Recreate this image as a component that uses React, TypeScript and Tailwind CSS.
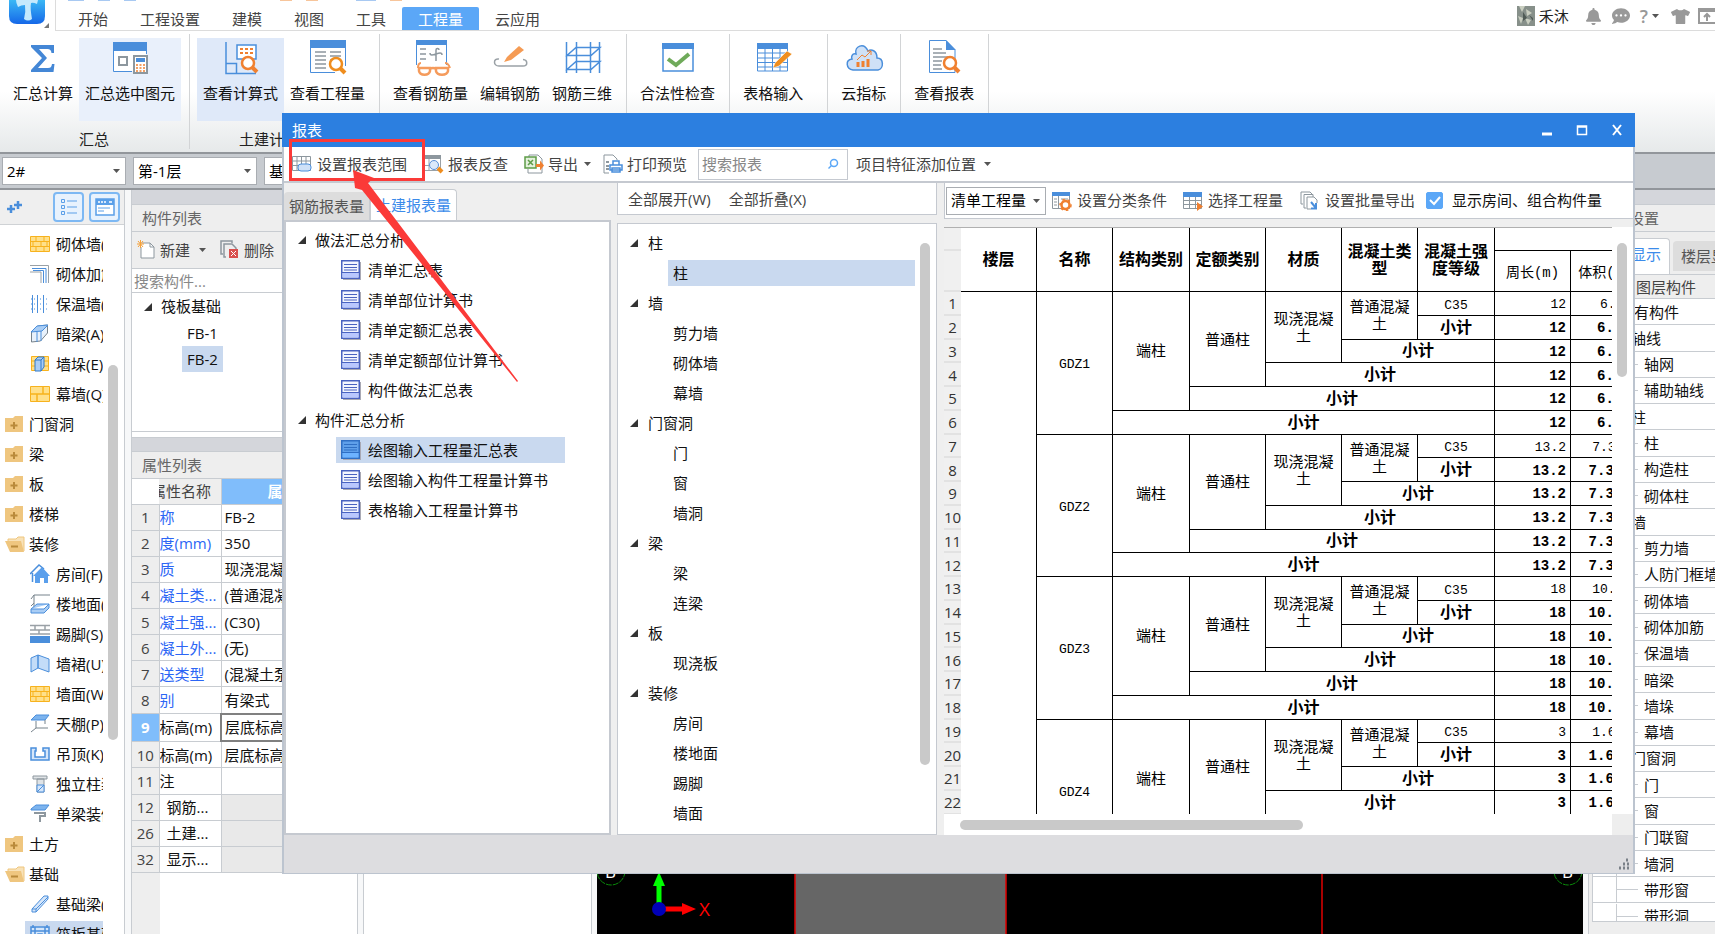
import { Fragment, useState } from "react";
import type { ReactNode } from "react";
import clsx from "clsx";
import { FaBell, FaCommentDots, FaTshirt } from "react-icons/fa";

const MENU_TABS = ["开始", "工程设置", "建模", "视图", "工具", "工程量", "云应用"];

const RIBBON_GROUPS = [
  { label: "汇总", buttons: [["汇总计算", "sigma"], ["汇总选中图元", "sumSelected"]] },
  { label: "土建计算结果", buttons: [["查看计算式", "formula"], ["查看工程量", "quantity"]] },
  { label: "", buttons: [["查看钢筋量", "rebarQty"], ["编辑钢筋", "rebarEdit"], ["钢筋三维", "rebar3d"]] },
  { label: "", buttons: [["合法性检查", "check"]] },
  { label: "", buttons: [["表格输入", "tableInput"]], wide: true },
  { label: "", buttons: [["云指标", "cloud"]] },
  { label: "", buttons: [["查看报表", "report"]] },
];

const NAV_ITEMS = [
  ["砌体墙(Q)", "brick"],
  ["砌体加筋(Y)", "corner"],
  ["保温墙(W)", "fence"],
  ["暗梁(A)", "box"],
  ["墙垛(E)", "pier"],
  ["幕墙(Q)", "brickBig"],
  ["门窗洞", "folder"],
  ["梁", "folder"],
  ["板", "folder"],
  ["楼梯", "folder"],
  ["装修", "folderOpen"],
  ["房间(F)", "house"],
  ["楼地面(V)", "floor"],
  ["踢脚(S)", "skirting"],
  ["墙裙(U)", "dado"],
  ["墙面(W)", "brick"],
  ["天棚(P)", "ceiling"],
  ["吊顶(K)", "suspended"],
  ["独立柱装修", "column"],
  ["单梁装修", "roller"],
  ["土方", "folder"],
  ["基础", "folderOpen"],
  ["基础梁(F)", "beam"],
  ["筏板基础(M)", "raft"],
];

const PROPERTIES = [
  { no: 1, name: "称", value: "FB-2", blue: true },
  { no: 2, name: "度(mm)", value: "350", blue: true },
  { no: 3, name: "质", value: "现浇混凝土", blue: true },
  { no: 4, name: "凝土类...", value: "(普通混凝土)", blue: true },
  { no: 5, name: "凝土强...", value: "(C30)", blue: true },
  { no: 6, name: "凝土外...", value: "(无)", blue: true },
  { no: 7, name: "送类型", value: "(混凝土泵)", blue: true },
  { no: 8, name: "别", value: "有梁式", blue: true },
  { no: 9, name: "标高(m)", value: "层底标高+0.35", active: true },
  { no: 10, name: "标高(m)", value: "层底标高" },
  { no: 11, name: "注", value: "" },
  { no: 12, name: "钢筋...", value: "", group: true },
  { no: 26, name: "土建...", value: "", group: true },
  { no: 32, name: "显示...", value: "", group: true },
];

const REPORT_TREE = [
  {
    title: "做法汇总分析",
    items: ["清单汇总表", "清单部位计算书", "清单定额汇总表", "清单定额部位计算书", "构件做法汇总表"],
  },
  {
    title: "构件汇总分析",
    items: ["绘图输入工程量汇总表", "绘图输入构件工程量计算书", "表格输入工程量计算书"],
  },
];

const ELEMENT_TREE = [
  { title: "柱", items: ["柱"] },
  { title: "墙", items: ["剪力墙", "砌体墙", "幕墙"] },
  { title: "门窗洞", items: ["门", "窗", "墙洞"] },
  { title: "梁", items: ["梁", "连梁"] },
  { title: "板", items: ["现浇板"] },
  { title: "装修", items: ["房间", "楼地面", "踢脚", "墙面"] },
];

const COLUMNS_DATA = [
  { name: "GDZ1", perimeter: "12", volume: "6.552" },
  { name: "GDZ2", perimeter: "13.2", volume: "7.3194" },
  { name: "GDZ3", perimeter: "18", volume: "10.296" },
  { name: "GDZ4", perimeter: "3", volume: "1.6560" },
];

const LAYERS: [string, number][] = [
  ["所有构件", 0],
  ["轴线", 1],
  ["轴网", 2],
  ["辅助轴线", 2],
  ["柱", 1],
  ["柱", 2],
  ["构造柱", 2],
  ["砌体柱", 2],
  ["墙", 1],
  ["剪力墙", 2],
  ["人防门框墙", 2],
  ["砌体墙", 2],
  ["砌体加筋", 2],
  ["保温墙", 2],
  ["暗梁", 2],
  ["墙垛", 2],
  ["幕墙", 2],
  ["门窗洞", 1],
  ["门", 2],
  ["窗", 2],
  ["门联窗", 2],
  ["墙洞", 2],
  ["带形窗", 2],
  ["带形洞", 2],
];

const BLUE = "#4a8edb";
const ORANGE = "#f08030";

function RibbonIcon({ name }: { name: string }) {
  const shapes: Record<string, ReactNode> = {
    sigma: (
      <path d="M8 7h23v8h-2.500c-.5-3-1.500-4-4-4H16l8 9-9 10h10c2.500 0 3.500-1 4-4h2.500l-1 8H8v-2l11-12L8 9z" fill="#4487d6" />
    ),
    sumSelected: (
      <>
        <path d="M4 4h32v29H4z" fill="#fff" />
        <path d="M3 4h34v9H3z" fill={BLUE} />
        <path d="M3.500 12v21.500H22M36.500 12v4" fill="none" stroke={BLUE} />
        <path d="M9 19h8v8H9z" fill="none" stroke="#8d979e" strokeWidth="2" />
        <path d="M24 18h13v17H24z" fill="#fff" stroke="#8d979e" strokeWidth="2" />
        <path d="M26 20h9v4h-9z" fill={BLUE} />
        <path d="M26 27h2m1.500 0h2m1.500 0h2M26 30h2m1.500 0h2m1.500 0h2M26 33h2m1.500 0h2m1.500 0h2" stroke={ORANGE} strokeWidth="1.500" />
      </>
    ),
    formula: (
      <>
        <path d="M5 4v31.500h30M5 25.500h10.500V35" fill="none" stroke={BLUE} strokeWidth="1.500" />
        <path d="M16 7h19v14H16z" fill="#fff" stroke={BLUE} strokeWidth="1.500" />
        <path d="M19 11h3m2 0h3m2 0h3M19 15h3m2 0h3m2 0h3" stroke={ORANGE} strokeWidth="2" />
        <circle cx="27" cy="25" r="6" fill="#fff" stroke={ORANGE} strokeWidth="2.500" />
        <path d="m31 29 5 5" stroke={ORANGE} strokeWidth="4" />
      </>
    ),
    quantity: (
      <>
        <path d="M2.500 3v31.500H27M37.500 3v25" fill="none" stroke={BLUE} />
        <path d="M2 2h36v8H2z" fill={BLUE} />
        <path d="M7 14h11M7 18h11M7 22h11M7 26h11M7 30h11M22 14h11M22 18h11M22 22h3" stroke="#8d979e" strokeWidth="1.500" />
        <circle cx="28" cy="26" r="6" fill="#fff" stroke="#ef8d1e" strokeWidth="2.500" />
        <path d="m32 30 5 5" stroke="#ef8d1e" strokeWidth="4" />
      </>
    ),
    rebarQty: (
      <>
        <path d="M5.500 3v24M35.500 3v24" stroke={BLUE} />
        <path d="M5 2h31v5H5z" fill={BLUE} />
        <path d="M9 11h6M9 16h6M9 21h6" stroke="#8d979e" strokeWidth="1.500" />
        <path d="M25 23V12c0-2 3-2 3 0M19 15c0 3 3 2 6 1s6-2 6 1" fill="none" stroke="#8d979e" strokeWidth="1.500" />
        <path d="M10 25c-2 0-3 2-3 5M34 25c3 0 4 2 5 5" fill="none" stroke="#f59b5c" strokeWidth="2" />
        <path d="M8 30h11v3c-1 5-10 5-11 0zM25 30h12v3c-1 5-11 5-12 0zM19 31q3-2 6 0" fill="none" stroke="#f59b5c" strokeWidth="2.500" />
      </>
    ),
    rebarEdit: (
      <>
        <path d="M9 21c-6-1-6 7 0 7h24c5 0 5-6 0-6.500" fill="none" stroke="#9aa1a6" strokeWidth="1.500" />
        <path d="M29 8 17 19l-3 5 7-2L34 12z" fill="#f59b54" />
      </>
    ),
    rebar3d: (
      <path
        d="M4.500 4v31M14.500 4v31M28.500 4v31M37.500 4v31M5 17.500h24l9-8H14zM5 31.500h24l9-8H14z"
        fill="none"
        stroke={BLUE}
        strokeWidth="1.500"
      />
    ),
    check: (
      <>
        <path d="M5 6h30v27H5z" fill="#fff" stroke={BLUE} strokeWidth="1.500" />
        <path d="M4 5h32v6H4z" fill={BLUE} />
        <path d="m10 21 8 6L31 16" fill="none" stroke="#6faa5a" strokeWidth="4" />
      </>
    ),
    tableInput: (
      <>
        <path d="M4.500 6h30v27h-30zM4 15h31M4 20h31M4 24.500h31M4 29h31M12 11v22M19.500 11v22M27 11v22" fill="none" stroke={BLUE} />
        <path d="M4 5h31v6H4z" fill={BLUE} />
        <path d="M34 13 22 25l-2 5 6-2 13-12z" fill="#ef8d1e" stroke="#fff" strokeWidth=".5" />
      </>
    ),
    cloud: (
      <>
        <path
          d="M9 32h25c6-1 6-12-1-12 0-8-6-9-9-7C20 4 10 8 12 16c-4-1-5 3-4 5-7 1-6 10 1 11z"
          fill="#cfe1f7"
          stroke={BLUE}
          strokeWidth="1.500"
        />
        <path d="M14 29v-5m5 5v-6m5 6v-8" stroke={ORANGE} strokeWidth="3" />
        <path d="m13 22 5-5 3 2 6-6m-4 0h4v4" fill="none" stroke={ORANGE} />
      </>
    ),
    report: (
      <>
        <path d="M5.500 2.500H22l9 9.500v22.500H5.500z" fill="#fff" stroke={BLUE} />
        <path d="M22 2v10h10z" fill={BLUE} />
        <path d="M9 11h9M9 15h13M9 19h15M9 23h9M9 27h8M9 31h9" stroke="#8d979e" strokeWidth="1.500" />
        <circle cx="26" cy="25" r="6" fill="#fff" stroke={ORANGE} strokeWidth="2.500" />
        <path d="m30 29 5 5" stroke={ORANGE} strokeWidth="4" />
      </>
    ),
  };
  return (
    <svg width="40" height="40" viewBox="0 0 40 40" aria-hidden="true">
      {shapes[name]}
    </svg>
  );
}

function NavIcon({ name }: { name: string }) {
  const shapes: Record<string, ReactNode> = {
    brick: (
      <>
        <path d="M.5 2.500h19v15H.5z" fill="#ffe08a" stroke="#f7b21d" />
        <path d="M0 7.500h20M0 12.500h20M6 2v5m8-5v5M3 8v4m8-4v4m6-4v4M6 13v5m8-5v5" stroke="#f7b21d" />
      </>
    ),
    brickBig: (
      <>
        <path d="M.5 2.500h19v15H.5z" fill="#ffe08a" stroke="#f7b21d" />
        <path d="M0 10h20M13 2v8m-6 0v8" stroke="#f7b21d" strokeWidth="1.500" />
      </>
    ),
    corner: (
      <>
        <path d="M0 1.500h18.500V19M0 8h11v11" fill="none" stroke="#9aa1a6" />
        <path d="M2 4.500h14V19M3 6.500h10.500V19" fill="none" stroke={BLUE} />
      </>
    ),
    fence: (
      <>
        <path d="M2.500 1v18m5-18v18m6-18v18" stroke={BLUE} />
        <path d="M1 5h16M1 10h16M1 15h16" stroke={BLUE} strokeDasharray="1 2" />
      </>
    ),
    box: (
      <>
        <path d="m1.500 8 6-6 10-1v8l-7 8-9 1z" fill="#e8f1fb" stroke="#77838c" />
        <path d="m1 8 6-6 11-1-6 6zM7 8v10M11 7v10" fill="#a9cdf5" stroke={BLUE} />
      </>
    ),
    pier: (
      <>
        <path d="M1.500 2.500h17v14h-17zM1 7h17M1 12h17" fill="#ffe08a" stroke="#f7b21d" />
        <path d="M5 6h6v11H5zM5 6l3-3h6v10l-3 4M11 6l3-3" fill="#a9cdf5" stroke="#2f78c8" />
      </>
    ),
    folder: (
      <>
        <path d="M0 4h8l2-2h8v16H0z" fill="#efc67f" />
        <path d="M9 8v7M5.500 11.500h7" stroke="#b98a3b" strokeWidth="2" />
      </>
    ),
    folderOpen: (
      <>
        <path d="M3 7V5h8l2-2h6v14" fill="#f8e2b8" stroke="#efc67f" />
        <path d="M0 7h16l3 11H5z" fill="#efc67f" />
        <path d="M6 12.500h7" stroke="#b98a3b" strokeWidth="2" />
      </>
    ),
    house: (
      <>
        <path d="M0 10 9 1l5 4M2.500 9v9" fill="none" stroke={BLUE} strokeWidth="1.500" />
        <path d="m3 12 9-9 8 9h-2v7h-4v-5h-4v5H5v-7z" fill="#5a9fec" />
      </>
    ),
    floor: (
      <>
        <path d="M20 1H4v13M4 9l-3 3M4 1 1 5" fill="none" stroke="#77838c" />
        <path d="M1 15 7 10h12l-5 5zM1 15v4h13l5-5v-4" fill="#a9cdf5" stroke={BLUE} />
      </>
    ),
    skirting: (
      <>
        <path d="M0 1.500h20M0 6h20M0 10h20M5 2v4m10-4v4M9 6v4" stroke="#9aa1a6" strokeWidth="1.500" />
        <path d="M0 12h20v7H0z" fill={BLUE} />
      </>
    ),
    dado: <path d="M1 4 8 1v13l-7 4zM8 1l11 4v13L8 14z" fill="#c3dcf8" stroke={BLUE} />,
    ceiling: (
      <>
        <path d="m1 6 5-5h13l-4 5z" fill="#7db4ee" stroke={BLUE} />
        <path d="M6 7v7l-5 4M6 14h12M15 6v4" fill="none" stroke="#77838c" />
      </>
    ),
    suspended: <path d="M1 4h5v3H5v6h10V7h-2V4h6v12H1z" fill="#d5e6fa" stroke={BLUE} strokeWidth="1.500" />,
    column: (
      <>
        <path d="M3 2h14v3H3zM7 5h7v13H7z" fill="#dfe3e6" stroke="#8d979e" />
        <path d="M7 11h7v7H7zM7 18l7-7" fill="#d5e6fa" stroke={BLUE} />
      </>
    ),
    roller: (
      <>
        <path d="m1 5 5-4h13l-4 5H1z" fill="#7db4ee" stroke={BLUE} />
        <path d="M4 9h11v3h-5v6" fill="none" stroke="#8d979e" strokeWidth="2" />
      </>
    ),
    beam: <path d="m2 15 12-13h4v3L6 18H2zM2 15l4 0v3M6 15 18 3" fill="#d5e6fa" stroke={BLUE} />,
    raft: <path d="M1 3h18v16H1zM5 3v16M15 3v16M1 7h18M8 10h4v5H8zM3 1v3m14-3v3" fill="#d5e6fa" stroke={BLUE} strokeWidth="1.500" />,
  };
  return (
    <svg width="20" height="20" viewBox="0 0 20 20" className="shrink-0" aria-hidden="true">
      {shapes[name]}
    </svg>
  );
}

function ToolIcon({ name }: { name: string }) {
  const shapes: Record<string, ReactNode> = {
    range: (
      <>
        <path d="M.5 2.500h18v14H.5zM0 7h18M0 11.500h18M5 2v14M9.500 2v9M14 2v9" fill="none" stroke="#8d979e" />
        <rect x="6" y="10" width="13" height="7" rx="3" fill="#cfe1f7" stroke={BLUE} />
      </>
    ),
    trace: (
      <>
        <path d="M.5 2.500h16v14H.5zM0 11.500h8M5 5v12" fill="none" stroke="#9aa1a6" />
        <path d="M0 1h17v4H0z" fill="#8d979e" />
        <circle cx="10" cy="11" r="4.500" fill="#dbe9fb" stroke="#5a8fd8" />
        <path d="m14 14 4 4" stroke="#ef8d1e" strokeWidth="4" />
      </>
    ),
    excel: (
      <>
        <path d="M5 3V1h9l4 4v14H4v-4" fill="#fff" stroke="#8d979e" />
        <path d="M1 3h11v11H1z" fill="#e4f1dd" stroke="#5e9c48" strokeWidth="1.500" />
        <path d="m4 6 5 5m0-5-5 5" stroke="#5e9c48" strokeWidth="1.500" />
        <path d="M12 10h4V6.500l4 5-4 5V13h-4z" fill={ORANGE} />
      </>
    ),
    print: (
      <>
        <path d="M14 6V5l-4-4H1v18h5" fill="#fff" stroke="#8d979e" />
        <path d="M3 8h3M3 12h3M3 15h3" stroke="#8d979e" strokeWidth="2" />
        <path d="M7 11h12v5H7zM10 7h6v4h-6zM9 14h8v4H9z" fill="#fff" stroke={BLUE} strokeWidth="1.500" />
      </>
    ),
    classify: (
      <>
        <path d="M.5 2.500h17v15H.5zM6.500 5v13M2 8h3M2 11h3M2 14h3M9 8h7" fill="#fff" stroke="#8d979e" />
        <path d="M0 1h18v4H0z" fill={BLUE} />
        <circle cx="13.500" cy="14" r="4" fill="#fff" stroke={ORANGE} strokeWidth="2.500" />
        <circle cx="13.500" cy="14" r="5.500" fill="none" stroke={ORANGE} strokeWidth="1.500" strokeDasharray="2.500 3" />
      </>
    ),
    grid: (
      <>
        <path d="M.5 5.500h18v12H.5zM0 9.500h18M0 13.500h18M6.500 6v12M12.500 6v12" fill="#fff" stroke="#8d979e" />
        <path d="M0 1h19v5H0z" fill={BLUE} />
        <path d="m14 11 6 4.500-6 4.500z" fill={ORANGE} />
      </>
    ),
    batch: (
      <>
        <path d="M3 13H1V1h9l2 2M6 17H4V3.500h9V6M7 6h7l3 3v3M7 6v12h4" fill="none" stroke="#8d979e" />
        <path d="m11 11 5 6m0-5v5.500h-5" fill="none" stroke={BLUE} strokeWidth="2" />
      </>
    ),
    create: (
      <>
        <path d="M5 3h8l4 4v11H4V7" fill="#fff" stroke="#8d979e" />
        <path d="M13 3v4h4" fill="none" stroke="#8d979e" />
        <path d="M3.500 0v8M0 4h7M1 1l5 6M6 1 1 7" stroke="#f5a13a" />
      </>
    ),
    remove: (
      <>
        <path d="M3 14H1V1h11v2M6 17H4V4h8l4 4v2" fill="none" stroke="#8d979e" strokeWidth="1.500" />
        <path d="M9 9h9v9H9z" fill="#d9504e" />
        <path d="m11 11 5 5m0-5-5 5" stroke="#fff" />
      </>
    ),
  };
  return (
    <svg width="20" height="20" viewBox="0 0 20 20" className="shrink-0" aria-hidden="true">
      {shapes[name]}
    </svg>
  );
}

function SheetIcon({ active }: { active?: boolean }) {
  return (
    <svg width="20" height="20" viewBox="0 0 20 20" className="shrink-0" aria-hidden="true">
      <path d="M2 2h18v18H2z" fill="#a9a9b4" />
      <path d="M.75.75h17.500v17.500H.75z" fill={active ? "#5fa0ea" : "#f4f6ff"} stroke={active ? "#2f6fc4" : "#4a63c0"} strokeWidth="1.500" />
      <path d="M1.500 13h16v4.500h-16z" fill={active ? "#6db3ff" : "#b9c8ff"} />
      <path d="M1 12.500h17M3 4.500h13M3 7.500h13M3 10h13" stroke={active ? "#2f6fc4" : "#4a63c0"} />
    </svg>
  );
}

function Caret() {
  return (
    <svg width="7" height="4" viewBox="0 0 7 4" className="shrink-0" aria-hidden="true">
      <path d="M0 0h7L3.500 4z" fill="#555" />
    </svg>
  );
}

function Toggle() {
  return (
    <svg width="8" height="8" viewBox="0 0 8 8" className="shrink-0" aria-hidden="true">
      <path d="M8 0v8H0z" fill="#333" />
    </svg>
  );
}

function Select({ label, options, className }: { label: string; options: string[]; className: string }) {
  return (
    <div className={clsx("relative flex shrink-0 items-center border bg-white", className)}>
      <select aria-label={label} className="h-full w-full appearance-none bg-transparent px-1 text-[15px] text-black outline-none">
        {options.map((o) => (
          <option key={o}>{o}</option>
        ))}
      </select>
      <span className="pointer-events-none absolute right-[5px]">
        <Caret />
      </span>
    </div>
  );
}

function MenuBar() {
  return (
    <header className="flex h-[31px] shrink-0 bg-white">
      <div className="w-[55px] shrink-0 pl-[9px]">
        <svg width="46" height="31" viewBox="0 0 46 31" aria-hidden="true">
          <defs>
            <linearGradient id="logo" x1="0" y1="0" x2="0" y2="1">
              <stop offset="0" stopColor="#3bb8f5" />
              <stop offset="1" stopColor="#1567e8" />
            </linearGradient>
          </defs>
          <path d="M0 0h36v16q0 8-8 8H8q-8 0-8-8z" fill="url(#logo)" />
          <path d="M7 0h22l-1 4q-4-2-6-1-1 5 1 16-4 3-8 0 2-7 1-14-4 0-7 2-2-4-2-7z" fill="#c4e9fd" />
          <path d="M40 23v5h-5z" fill="#777" />
        </svg>
      </div>
      <div className="flex flex-1 flex-col border-b border-l border-[#dcdcdc]">
        <div className="flex h-px gap-3.5 pl-3" aria-hidden="true">
          <i className="w-4 bg-[#a8c9f2]" />
          <i className="w-3 bg-[#a8c9f2]" />
          <i className="w-3 bg-[#a8c9f2]" />
          <i className="ml-[130px] w-3 bg-[#f7c59b]" />
          <i className="w-3 bg-[#f7c59b]" />
          <i className="ml-6 w-5 bg-[#a8c9f2]" />
          <i className="w-3 bg-[#f7c59b]" />
        </div>
        <nav className="flex flex-1 items-end pl-1.5">
          {MENU_TABS.map((tab) => (
            <button
              key={tab}
              className={clsx(
                "h-[23px] px-4 text-[15px] leading-6",
                tab === "工程量" ? "rounded-t-[2px] bg-[#5ba7f7] text-white" : "text-[#444]"
              )}
            >
              {tab}
            </button>
          ))}
          <div className="ml-auto flex h-[28px] items-center text-[#999]">
            <svg width="18" height="20" viewBox="0 0 18 20" aria-hidden="true">
              <path d="M0 0h18v20H0z" fill="#87908a" />
              <path d="M2 0h6l-3 6zM9 3l6 4-5 3zM1 10l5 2-2 6zM8 12l6 2-3 5z" fill="#c9cec0" />
              <path d="M6 6l4 6-4 3zM12 9l4 3v3z" fill="#4f5a55" />
            </svg>
            <span className="ml-1 text-[15px] text-[#222]">禾沐</span>
            <button aria-label="通知" className="ml-4"><FaBell size={17} /></button>
            <button aria-label="消息" className="ml-2.5"><FaCommentDots size={18} /></button>
            <button aria-label="帮助" className="ml-2.5 flex items-center gap-1 text-[18px] font-semibold">
              ?<Caret />
            </button>
            <button aria-label="皮肤" className="ml-3"><FaTshirt size={19} /></button>
            <button aria-label="收起" className="ml-2">
              <svg width="17" height="16" viewBox="0 0 17 16">
                <path d="M1 1h18v14H1zM1 3h18M9 13V6M6 9l3-3 3 3" fill="none" stroke="#999" strokeWidth="2" />
              </svg>
            </button>
          </div>
        </nav>
      </div>
    </header>
  );
}

function Ribbon() {
  return (
    <div className="flex h-[123px] shrink-0 border-b-2 border-[#92969b] bg-linear-to-b from-white from-50% to-[#e6e9ea] py-[3px]">
      {RIBBON_GROUPS.map((group) => (
        <div
          key={group.buttons[0][0]}
          className={clsx("flex shrink-0 flex-col border-r border-[#d2d4d6] pt-1 pr-2 pl-[7px]", group.wide && "w-[98px]")}
        >
          <div className="flex">
            {group.buttons.map(([label, icon]) => (
              <button
                key={label}
                className={clsx(
                  "flex h-[83px] flex-col items-center px-1.5",
                  label === "汇总选中图元" && "bg-[#e9f0fb]",
                  label === "查看计算式" && "bg-[#dfe9f9]"
                )}
              >
                <RibbonIcon name={icon} />
                <span className="mt-[5px] text-[15px] leading-5 text-[#111]">{label}</span>
              </button>
            ))}
          </div>
          <span className="mt-2 text-center text-[15px] leading-5 text-[#222]">{group.label}</span>
        </div>
      ))}
    </div>
  );
}

function Navigator() {
  return (
    <aside className="flex w-[125px] shrink-0 flex-col border-r border-[#c8ccd1] bg-white">
      <div className="flex h-[35px] shrink-0 items-center border-b border-[#cfd2d5] bg-[#efefef] pl-[7px]">
        <svg width="16" height="14" viewBox="0 0 16 14" aria-hidden="true">
          <path d="M4 5v8M0 9h8M11 1v8M7 5h8" stroke={BLUE} strokeWidth="2.500" />
        </svg>
        <button aria-label="列表" className="ml-[30px] flex h-[30px] w-[31px] items-center justify-center rounded-[4px] border-2 border-[#7db8f3] bg-[#e8f2fd]">
          <svg width="16" height="18" viewBox="0 0 16 18">
            <path d="M.5 1.500h3v3h-3zM.5 7.500h3v3h-3zM.5 13.500h3v3h-3zM6 3h10M6 9h10M6 15h10" fill="none" stroke="#5a9fe8" />
          </svg>
        </button>
        <button aria-label="面板" className="ml-[5px] flex h-[30px] w-[31px] items-center justify-center rounded-[4px] border-2 border-[#7db8f3] bg-[#e8f2fd]">
          <svg width="20" height="18" viewBox="0 0 20 18">
            <path d="M1 1h18v16H1z" fill="#fff" stroke="#5a9fe8" strokeWidth="1.500" />
            <path d="M1 1h18v6H1z" fill="#5a9fe8" />
            <path d="M3 4h2m1 0h2m1 0h2m3 0h3" stroke="#fff" strokeWidth="1.500" />
            <path d="M3 10h12M3 13h6" stroke="#5a9fe8" />
          </svg>
        </button>
      </div>
      <div className="flex min-h-0 flex-1">
        <ul className="w-[103px] shrink-0 overflow-hidden pt-1">
          {NAV_ITEMS.map(([label, icon]) => {
            const category = icon.startsWith("folder");
            return (
              <li key={label} className="flex h-[30px] items-center">
                <button
                  className={clsx(
                    "flex h-[26px] items-center text-[15px] whitespace-nowrap text-[#111]",
                    category ? "gap-1 pl-[5px]" : "ml-[25px] gap-1.5 pr-4 pl-[5px]",
                    icon === "raft" && "bg-[#c9d9ef]"
                  )}
                >
                  <NavIcon name={icon} />
                  {label}
                </button>
              </li>
            );
          })}
        </ul>
        <div className="mt-[140px] ml-[5px] h-[375px] w-2.5 rounded-full bg-[#c9c9c9]" />
      </div>
    </aside>
  );
}

function ComponentPanels() {
  return (
    <section className="flex w-[227px] shrink-0 flex-col border-x border-[#c8ccd1] bg-white">
      <div className="h-[15px] shrink-0 border-b border-[#c8ccd1] bg-[#d4d6db]" />
      <h2 className="h-[27px] shrink-0 border-b border-[#c8ccd1] bg-[#eee] pl-2.5 text-[15px] leading-[27px] text-[#666]">构件列表</h2>
      <div className="flex h-[37px] shrink-0 items-center border-b border-[#c8ccd1] bg-[#eee] pl-[5px] text-[15px] text-[#444]">
        <button className="flex items-center gap-[3px]">
          <ToolIcon name="create" />
          新建
          <span className="ml-1.5"><Caret /></span>
        </button>
        <button className="ml-3.5 flex items-center gap-1">
          <ToolIcon name="remove" />
          删除
        </button>
      </div>
      <input
        aria-label="搜索构件"
        placeholder="搜索构件..."
        className="h-6 shrink-0 border-b border-[#c8ccd1] px-0.5 text-[15px] placeholder-[#888] outline-none"
      />
      <ul className="h-[139px] shrink-0 border-b border-[#c8ccd1] text-[15px] text-[#111]">
        <li className="flex h-[27px] items-center gap-[9px] pl-3"><Toggle />筏板基础</li>
        <li className="flex h-[26px] items-center pl-[50px]"><span className="px-[5px]">FB-1</span></li>
        <li className="flex h-[26px] items-center pl-[50px]"><span className="bg-[#c9d9ef] px-[5px] leading-[26px]">FB-2</span></li>
      </ul>
      <div className="mt-[5px] h-[15px] shrink-0 border-y border-[#c8ccd1] bg-[#d4d6db]" />
      <h2 className="h-[27px] shrink-0 border-b border-[#c8ccd1] bg-[#eee] pl-2.5 text-[15px] leading-[27px] text-[#666]">属性列表</h2>
      <table className="h-[394px] w-full shrink-0 table-fixed text-left text-[15px] leading-5 text-[#111]">
        <colgroup>
          <col className="w-[27px]" />
          <col className="w-[62px]" />
          <col />
        </colgroup>
        <thead>
          <tr className="h-[25px]">
            <th className="p-0" />
            <th className="overflow-hidden border border-t-0 border-l-0 border-[#c8ccd1] bg-[#eee] p-0 font-normal whitespace-nowrap text-[#444]">
              <div className="-ml-2">属性名称</div>
            </th>
            <th className="bg-[#80bdfb] p-0 pl-[46px] font-semibold text-white">属性值</th>
          </tr>
        </thead>
        <tbody>
          {PROPERTIES.map((p) => (
            <tr key={p.no}>
              <td className={clsx("border-y border-[#c8ccd1] p-0 text-center", p.active ? "bg-[#80bdfb] font-bold text-white" : "bg-[#eee] text-[#444]")}>
                {p.no}
              </td>
              <td className={clsx("overflow-hidden border border-[#c8ccd1] p-0 whitespace-nowrap", p.blue && "text-[#2c66f5]", p.group && "pl-[7px]")}>
                {p.name}
              </td>
              <td className={clsx("overflow-hidden p-0 pl-[3px] whitespace-nowrap", p.active ? "border-2 border-[#808080]" : "border border-[#c8ccd1]", p.group && "bg-[#e9e9e9]")}>
                {p.value}
              </td>
            </tr>
          ))}
        </tbody>
      </table>
      <div className="w-7 flex-1 bg-[#eee]" />
    </section>
  );
}

function Viewport() {
  return (
    <div className="flex min-w-0 flex-1 flex-col justify-end overflow-hidden bg-black">
      <svg width="986" height="80" viewBox="0 0 986 80" className="shrink-0">
        <path d="M198 0h211v80H198z" fill="#666" />
        <path d="M198 0v80M409 0v80M725 0v80" stroke="#e00000" strokeWidth="1.500" />
        <circle cx="14" cy="17" r="14" fill="none" stroke="#0a8a0a" strokeDasharray="6 1" />
        <circle cx="971" cy="17" r="14" fill="none" stroke="#0a8a0a" strokeDasharray="6 1" />
        <text x="8" y="24" fill="#fff" fontSize="17">B</text>
        <text x="965" y="24" fill="#fff" fontSize="17">B</text>
        <path d="M62 50V30" stroke="#0f0" strokeWidth="5" />
        <path d="M62 18l6 14H56z" fill="#0f0" />
        <path d="M66 55h20" stroke="#f00" strokeWidth="5" />
        <path d="M99 55l-14-6v12z" fill="#f00" />
        <circle cx="62" cy="55" r="7" fill="#0000b8" />
        <text x="102" y="62" fill="#f00" fontSize="19">X</text>
      </svg>
    </div>
  );
}

function LayerPanel() {
  return (
    <aside className="flex w-[127px] shrink-0 flex-col overflow-hidden border-l border-[#c8ccd1] bg-[#eee] text-[15px] text-[#111]">
      <div className="h-[15px] shrink-0 border-b border-[#c8ccd1] bg-[#d4d6db]" />
      <h2 className="h-[27px] shrink-0 border-b border-[#c8ccd1] pl-2.5 leading-[27px] text-[#666]">显示设置</h2>
      <div className="flex h-[42px] shrink-0 items-end gap-[3px] pl-[3px] whitespace-nowrap">
        <button className="h-9 shrink-0 rounded-t-[4px] border border-b-0 border-[#c8ccd1] bg-white px-2 pb-1 text-[#3b8bea]">图元显示</button>
        <button className="mb-[3px] h-[30px] shrink-0 rounded-t-[4px] bg-[#ddd] px-2 text-[#555]">楼层显示</button>
      </div>
      <div className="ml-[3px] h-[648px] shrink-0 overflow-hidden border-b border-l border-[#c8ccd1] bg-white">
        <table className="h-[656px] w-full leading-5 whitespace-nowrap">
          <thead>
            <tr className="h-6">
              <th className="border-y border-[#c8ccd1] bg-[#eee] p-0 pl-[43px] text-left font-normal text-[#444]">图层构件</th>
            </tr>
          </thead>
          <tbody>
            {LAYERS.map(([name, depth], i) => (
              <tr key={i}>
                <td className="border-b border-[#c8ccd1] p-0">
                  <div
                    className={clsx(
                      "flex h-[25px] items-center",
                      depth === 0 && "pl-[26px]",
                      depth === 1 && "pl-[38px]",
                      depth === 2 && "gap-1.5 pl-[23px]"
                    )}
                  >
                    {depth === 2 && <span className="flex h-[25px] w-[22px] items-center border-l border-[#c8ccd1]"><i className="h-px w-full bg-[#c8ccd1]" /></span>}
                    {name}
                  </div>
                </td>
              </tr>
            ))}
          </tbody>
        </table>
      </div>
    </aside>
  );
}

function ReportTree() {
  const [selected, setSelected] = useState("绘图输入工程量汇总表");
  return (
    <div className="flex w-[327px] shrink-0 flex-col pt-[6px]">
      <div className="flex h-[31px] shrink-0 items-end text-[15px]">
        <button className="h-7 rounded-t-[4px] border-r border-[#c8ccd1] bg-[#ddd] px-[5px] text-[#555]">钢筋报表量</button>
        <button className="h-[31px] rounded-t-[4px] border border-b-0 border-[#c8ccd1] bg-white px-[5px] text-[#3b8bea]">土建报表量</button>
      </div>
      <ul className="flex-1 border-2 border-[#c5c9d0] bg-white pt-[3px] text-[15px] text-[#111]">
        {REPORT_TREE.map((group) => (
          <Fragment key={group.title}>
            <li className="flex h-[30px] items-center gap-[9px] pl-3"><Toggle />{group.title}</li>
            {group.items.map((item) => (
              <li key={item} className="flex h-[30px] items-center pl-[50px]">
                <button
                  onClick={() => setSelected(item)}
                  className={clsx("flex h-[26px] w-[229px] items-center gap-[7px] pl-[5px] whitespace-nowrap", item === selected && "bg-[#c9d9ef]")}
                >
                  <SheetIcon active={item === selected} />
                  {item}
                </button>
              </li>
            ))}
          </Fragment>
        ))}
      </ul>
    </div>
  );
}

function ElementTree() {
  return (
    <div className="flex w-[320px] shrink-0 flex-col gap-2">
      <div className="flex h-8 shrink-0 items-center gap-[18px] border border-t-0 border-[#c5c9d0] bg-white pt-px pl-2.5 text-[15px] text-[#444]">
        <button>全部展开(W)</button>
        <button>全部折叠(X)</button>
      </div>
      <div className="flex min-h-0 flex-1 border border-[#c5c9d0] bg-white">
        <ul className="flex-1 overflow-hidden pt-1 text-[15px] text-[#111]">
          {ELEMENT_TREE.map((group) => (
            <Fragment key={group.title}>
              <li className="flex h-[30px] items-center gap-2.5 pl-3"><Toggle />{group.title}</li>
              {group.items.map((item) => (
                <li key={item} className="flex h-[30px] items-center pl-[50px]">
                  <button className={clsx("h-[26px] w-full pl-[5px] text-left", group.title === "柱" && "bg-[#c9d9ef]")}>{item}</button>
                </li>
              ))}
            </Fragment>
          ))}
        </ul>
        <div className="mr-1.5 ml-[5px] mt-[19px] h-[522px] w-2.5 rounded-full bg-[#c9c9c9]" />
      </div>
    </div>
  );
}

const CELL = "border-r border-b border-black p-0 pt-1 text-center";
const NUM = "border-r border-b border-black p-0 pt-[3px] text-right";
const ROW_NO = "border-b-2 border-[#e2e2e2] bg-[#f0f0f0] p-0 pt-0.5 text-center font-['Open_Sans','Noto_Sans_CJK_SC',sans-serif] text-[15px] text-[#333]";

function QuantityTable() {
  return (
    <table className="h-[634px] w-[704px] table-fixed border-separate border-spacing-0 font-['Liberation_Mono','Noto_Sans_CJK_SC',monospace] text-[15px] leading-[17px] text-black">
      <colgroup>
        <col className="w-[17px]" />
        <col className="w-[76px]" />
        <col className="w-[76px]" />
        <col className="w-[77px]" />
        <col className="w-[76px]" />
        <col className="w-[76px]" />
        <col className="w-[76px]" />
        <col className="w-[77px]" />
        <col className="w-[76px]" />
        <col className="w-[77px]" />
      </colgroup>
      <thead className="text-[16px] font-bold">
        <tr className="h-[23px]">
          <td className={ROW_NO} />
          {["楼层", "名称", "结构类别", "定额类别", "材质", "混凝土类型", "混凝土强度等级"].map((h) => (
            <th key={h} rowSpan={2} className="border-r border-b border-black px-1 pt-1 pb-0 text-center">{h}</th>
          ))}
          <td colSpan={2} className={CELL} />
        </tr>
        <tr className="h-[41px]">
          <td className={ROW_NO} />
          <th className={clsx(CELL, "text-[14px] font-normal")}>周长(m)</th>
          <th className={clsx(CELL, "text-[14px] font-normal")}>体积(m3)</th>
        </tr>
      </thead>
      <tbody>
        {COLUMNS_DATA.map((d, g) =>
          [1, 2, 3, 4, 5, 6].map((n) => (
            <tr key={d.name + n}>
              <td className={ROW_NO}>{g * 6 + n}</td>
              {g === 0 && n === 1 && <td rowSpan={24} className={CELL} />}
              {n === 1 && (
                <>
                  <td rowSpan={6} className={clsx(CELL, "text-[13px]")}>{d.name}</td>
                  <td rowSpan={5} className={CELL}>端柱</td>
                  <td rowSpan={4} className={CELL}>普通柱</td>
                  <td rowSpan={3} className={clsx(CELL, "px-1")}>现浇混凝土</td>
                  <td rowSpan={2} className={clsx(CELL, "px-1")}>普通混凝土</td>
                  <td className={clsx(CELL, "text-[13px]")}>C35</td>
                </>
              )}
              {n > 1 && <td colSpan={n - 1} className={clsx(CELL, "text-[16px] font-bold")}>小计</td>}
              <td className={clsx(NUM, "pr-1", n === 1 ? "text-[13px]" : "text-[14px] font-bold")}>{d.perimeter}</td>
              <td className={clsx(NUM, "pr-2", n === 1 ? "text-[13px]" : "text-[14px] font-bold")}>{d.volume}</td>
            </tr>
          ))
        )}
      </tbody>
    </table>
  );
}

function ReportView() {
  const [showRooms, setShowRooms] = useState(true);
  return (
    <div className="flex min-w-0 flex-1 flex-col">
      <div className="flex h-9 shrink-0 items-center border-b border-l border-[#c5c9d0] bg-white pl-px text-[15px] whitespace-nowrap text-[#444]">
        <Select label="工程量类型" options={["清单工程量", "定额工程量"]} className="h-7 w-[100px] border-[#a9adb2]" />
        <button className="ml-1.5 flex items-center gap-[5px]"><ToolIcon name="classify" />设置分类条件</button>
        <button className="ml-4 flex items-center gap-[5px]"><ToolIcon name="grid" />选择工程量</button>
        <button className="ml-[17px] flex items-center gap-[5px]"><ToolIcon name="batch" />设置批量导出</button>
        <label className="relative ml-[11px] flex items-center gap-[9px] text-[#111]">
          <input
            type="checkbox"
            checked={showRooms}
            onChange={(e) => setShowRooms(e.target.checked)}
            className="size-[17px] appearance-none rounded-[2px] border border-[#5ba7f7] checked:bg-[#5ba7f7]"
          />
          {showRooms && (
            <svg width="17" height="17" viewBox="0 0 17 17" className="pointer-events-none absolute left-0">
              <path d="m4 8 4 4 6-7" fill="none" stroke="#fff" strokeWidth="2" />
            </svg>
          )}
          显示房间、组合构件量
        </label>
      </div>
      <div className="mt-2 flex min-h-0 flex-1">
        <div className="flex min-w-0 flex-1 flex-col bg-white">
          <div className="min-h-0 flex-1 overflow-hidden border-t border-[#b0b0b0]">
            <QuantityTable />
          </div>
          <div className="flex h-[21px] shrink-0 items-center pl-4">
            <div className="h-2.5 w-[343px] rounded-full bg-[#c9c9c9]" />
          </div>
        </div>
        <div className="flex w-[21px] shrink-0 flex-col bg-white">
          <div className="mt-4 ml-[5px] h-[134px] w-2.5 rounded-full bg-[#c9c9c9]" />
          <div className="mt-auto h-[21px] bg-[#eee]" />
        </div>
      </div>
    </div>
  );
}

function ReportDialog() {
  return (
    <div
      role="dialog"
      aria-label="报表"
      className="absolute top-[113px] right-20 bottom-[60px] left-[282px] flex flex-col border-x-2 border-b border-[#bcc4cf] bg-[#efefef]"
    >
      <div className="-mx-0.5 flex h-[34px] shrink-0 items-center bg-[#2c7fe0] pr-3 pl-2.5 text-white">
        <h1 className="text-[15px]">报表</h1>
        <div className="ml-auto flex gap-[23px]">
          <button aria-label="最小化"><svg width="12" height="12" viewBox="0 0 12 12"><path d="M1 10h10" stroke="#fff" strokeWidth="3" /></svg></button>
          <button aria-label="最大化"><svg width="12" height="12" viewBox="0 0 12 12"><path d="M1.500 2h9v8.500h-9zM1 3h10" fill="none" stroke="#fff" strokeWidth="1.500" /></svg></button>
          <button aria-label="关闭"><svg width="12" height="12" viewBox="0 0 12 12"><path d="m2 1 8 10m0-10L2 11" stroke="#fff" strokeWidth="2" /></svg></button>
        </div>
      </div>
      <div className="flex h-9 shrink-0 items-center border-b-2 border-[#c5c9d0] bg-white pl-2 text-[15px] whitespace-nowrap text-[#444]">
        <button className="flex items-center gap-[5px]"><ToolIcon name="range" />设置报表范围</button>
        <button className="ml-[17px] flex items-center gap-1"><ToolIcon name="trace" />报表反查</button>
        <button className="ml-4 flex items-center gap-1"><ToolIcon name="excel" />导出<span className="ml-0.5"><Caret /></span></button>
        <button className="ml-3 flex items-center gap-1"><ToolIcon name="print" />打印预览</button>
        <label className="ml-[11px] flex h-[31px] w-[150px] items-center border border-[#c5c9d0]">
          <input aria-label="搜索报表" placeholder="搜索报表" className="w-full min-w-0 pl-[3px] placeholder-[#888] outline-none" />
          <svg width="12" height="12" viewBox="0 0 12 12" className="mr-2 shrink-0">
            <circle cx="7" cy="5" r="3.500" fill="none" stroke="#5ba7f7" strokeWidth="1.500" />
            <path d="m4.500 7.500-3 3" stroke="#5ba7f7" strokeWidth="1.500" />
          </svg>
        </label>
        <button className="ml-2 flex items-center gap-2">项目特征添加位置<Caret /></button>
      </div>
      <div className="flex min-h-0 flex-1">
        <ReportTree />
        <div className="w-[6px] shrink-0" />
        <ElementTree />
        <div className="w-[7px] shrink-0" />
        <ReportView />
      </div>
      <div className="flex h-[38px] shrink-0 items-end justify-end bg-[#dddde0] p-[3px]">
        <svg width="12" height="12" viewBox="0 0 12 12" aria-hidden="true">
          <path d="M8 2h3M5 6h3m1 0h3M1 10h3m1 0h3m1 0h3" stroke="#7a8088" strokeWidth="3" strokeDasharray="2 1" />
        </svg>
      </div>
    </div>
  );
}

function Callout() {
  return (
    <svg className="pointer-events-none absolute top-0 left-0" width="540" height="400" viewBox="0 0 540 400" aria-hidden="true">
      <path d="M290.500 140.500h133v39h-133z" fill="none" stroke="#fb3a38" strokeWidth="3" />
      <path d="M353 170l21 8-6 5 150 198-1 1-155-192-7-2z" fill="#fb3a38" />
    </svg>
  );
}

export default function App() {
  return (
    <div className="relative flex h-screen w-full flex-col overflow-hidden bg-white font-['Open_Sans','Noto_Sans_CJK_SC',sans-serif]">
      <MenuBar />
      <Ribbon />
      <div className="flex h-9 shrink-0 items-center gap-[7px] border-b-2 border-[#92969b] bg-[#c7cbd0] pl-0.5">
        <Select label="工程" options={["2#"]} className="h-7 w-[124px] border-[#a9adb2]" />
        <Select label="楼层" options={["第-1层", "首层"]} className="h-7 w-[124px] border-[#a9adb2]" />
        <Select label="构件类别" options={["基础"]} className="h-7 w-[124px] border-[#a9adb2]" />
      </div>
      <main className="flex min-h-0 flex-1 bg-[#f7f8f9]">
        <Navigator />
        <div className="w-[6px] shrink-0" />
        <ComponentPanels />
        <div className="w-[5px] shrink-0" />
        <div className="w-[229px] shrink-0 border-x border-[#c8ccd1] bg-white" />
        <div className="w-[5px] shrink-0" />
        <Viewport />
        <div className="w-[5px] shrink-0" />
        <LayerPanel />
      </main>
      <ReportDialog />
      <Callout />
    </div>
  );
}
